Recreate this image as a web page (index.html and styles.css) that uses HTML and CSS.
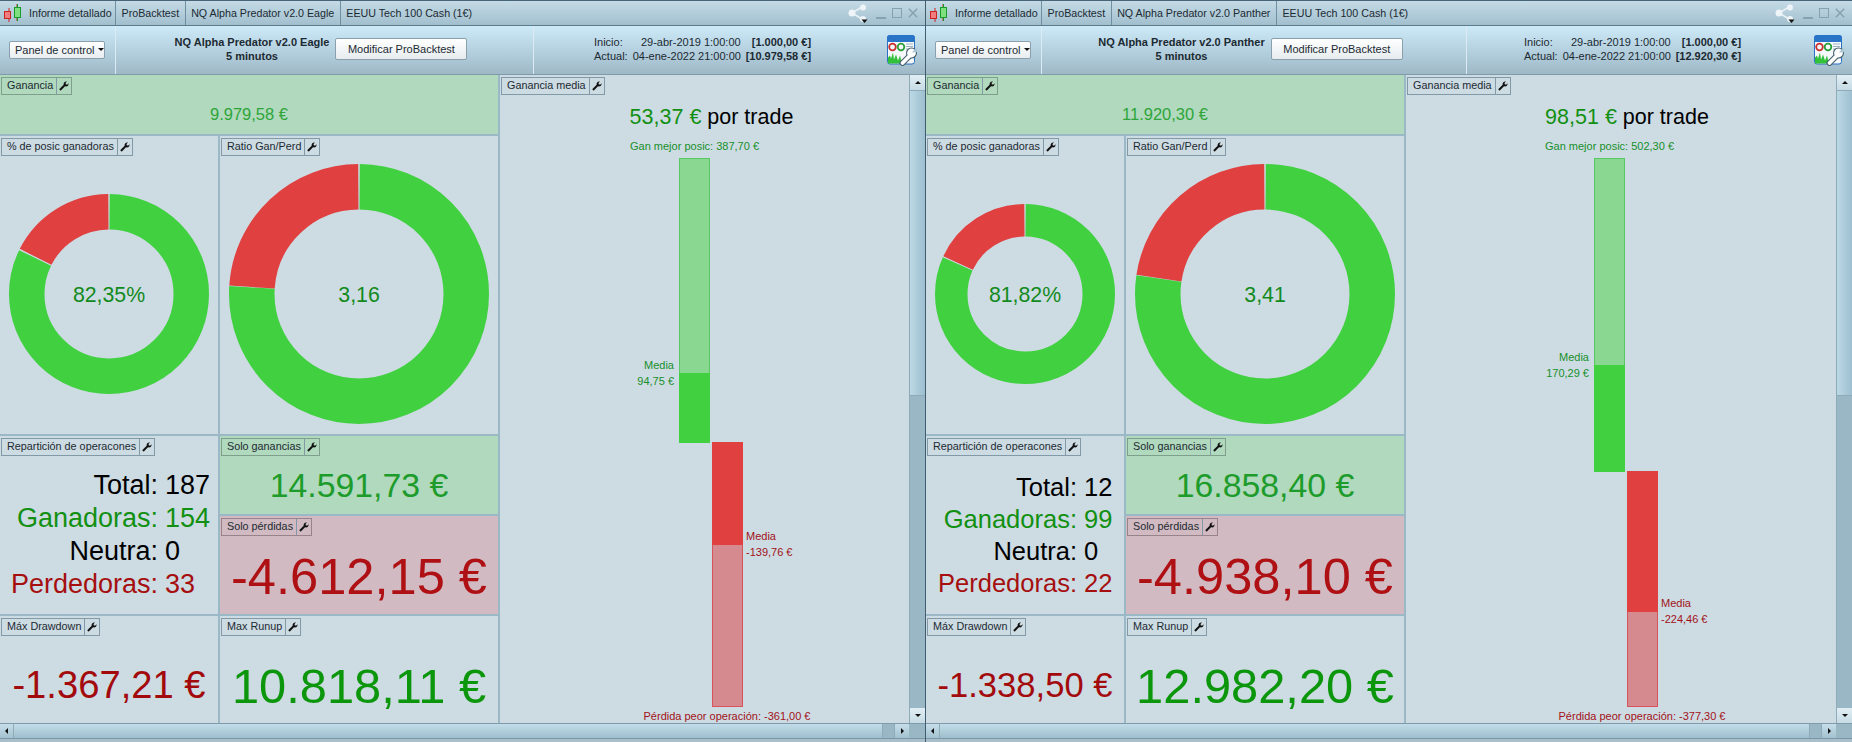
FILE: index.html
```html
<!DOCTYPE html>
<html lang="es">
<head>
<meta charset="utf-8">
<title>Informe detallado</title>
<link rel="stylesheet" href="styles.css">
</head>
<body>
<svg class="defs" width="0" height="0" aria-hidden="true">
  <defs>
    <symbol id="wrench" viewBox="0 0 12 12">
      <path d="M.8 10 5.6 5.2C5 3 6.700 .8 9.600 1.200L7.800 3.100 8.200 4.600 9.700 5 11.500 3.200C11.800 6 9.500 7.800 7.200 7L2.500 11.700C2 12.100 1.400 12 1 11.500L.7 11.200C.4 10.800.4 10.400.8 10Z"/>
    </symbol>
    <symbol id="candles" viewBox="0 0 19 18">
      <path d="M6 4v14M14 0v17" stroke="#c22" stroke-width="1"/>
      <path d="M14.500 0v17" stroke="#1a9a2a" stroke-width="1"/>
      <rect x="1.500" y="7.500" width="6" height="7" fill="#ef7d7d" stroke="#c22"/>
      <rect x="11.500" y="3.500" width="6" height="10" fill="#7fe07f" stroke="#1a9a2a"/>
    </symbol>
    <symbol id="share" viewBox="0 0 20 20">
      <path d="M14 3 4 9l10 6" fill="none" stroke="#e9f1f5" stroke-width="1.600"/>
      <circle cx="15" cy="3.500" r="3" fill="#eef4f7"/>
      <circle cx="4" cy="9" r="3.500" fill="#eef4f7"/>
      <circle cx="15" cy="15" r="3" fill="#eef4f7"/>
      <path d="M13.500 15.500h6l-3 3.500z" fill="#111"/>
    </symbol>
    <symbol id="tool" viewBox="0 0 30 31">
      <rect x=".5" y=".5" width="27" height="28.500" rx="2.500" fill="#f6f9fb" stroke="#2a6fc0"/>
      <path d="M0 3C0 1 1 0 3 0h22c2 0 3 1 3 3v4H0z" fill="#2a74c8"/>
      <circle cx="5.500" cy="12" r="3.300" fill="none" stroke="#c93030" stroke-width="1.800"/>
      <circle cx="14" cy="12" r="3.300" fill="none" stroke="#2aa03a" stroke-width="1.800"/>
      <path d="M19 9h7M19 11.500h7M19 14h7" stroke="#9db3c2"/>
      <path d="M1 28.500v-6l2-2 1 3 2-6 1 7 2-5 2 6 2-5 1 4 2 4z" fill="#33c13a"/>
      <path d="M15.500 28 23.500 20" stroke="#48606e" stroke-width="6" stroke-linecap="round"/>
      <circle cx="24.500" cy="18" r="5.500" fill="#48606e"/>
      <path d="M15.500 28 23.500 20" stroke="#fff" stroke-width="3.800" stroke-linecap="round"/>
      <circle cx="24.500" cy="18" r="4.400" fill="#fff"/>
      <path d="M25 17.500 29 12.500 31 17z" fill="#a9c4d2"/>
    </symbol>
  </defs>
</svg>

<div class="desk">

<section class="win win-a">
  <div class="tabs">
    <div class="tab tab-first"><svg class="candle"><use href="#candles"/></svg><span>Informe detallado</span></div>
    <div class="tab">ProBacktest</div>
    <div class="tab">NQ Alpha Predator v2.0 Eagle</div>
    <div class="tab tab-last">EEUU Tech 100 Cash (1€)</div>
    <div class="winctl">
      <svg class="share"><use href="#share"/></svg>
      <span class="min"></span><span class="max"></span>
      <svg class="close" viewBox="0 0 12 12"><path d="M1 1l10 10M11 1 1 11"/></svg>
    </div>
  </div>
  <div class="toolbar">
    <div class="tb-left"><button class="pick">Panel de control<i class="caret"></i></button></div>
    <div class="tb-mid">
      <div class="tb-title">NQ Alpha Predator v2.0 Eagle<br>5 minutos</div>
      <button class="modify">Modificar ProBacktest</button>
    </div>
    <div class="tb-right">
      <div class="info">
        <span>Inicio:</span><span class="date">29-abr-2019 1:00:00</span><b>[1.000,00 €]</b>
        <span>Actual:</span><span class="date">04-ene-2022 21:00:00</span><b>[10.979,58 €]</b>
      </div>
      <svg class="tool"><use href="#tool"/></svg>
    </div>
  </div>
  <div class="main">
    <div class="dash">
      <div class="panel gain gain-top">
        <div class="tag"><span>Ganancia</span><svg class="wr"><use href="#wrench"/></svg></div>
        <div class="val v16">9.979,58 €</div>
      </div>
      <div class="panel pct">
        <div class="tag"><span>% de posic ganadoras</span><svg class="wr"><use href="#wrench"/></svg></div>
        <div class="donut">
          <svg width="200" height="200" viewBox="-100 -100 200 200">
            <g class="rot" fill="none" stroke-width="35.500">
              <circle r="82.250" pathLength="100" stroke="#40d040" stroke-dasharray="82.120 100" stroke-dashoffset="-.12"/>
              <circle r="82.250" pathLength="100" stroke="#e04040" stroke-dasharray="17.410 100" stroke-dashoffset="-82.470"/>
            </g>
            <text class="dtext" y="8">82,35%</text>
          </svg>
        </div>
      </div>
      <div class="panel ratio">
        <div class="tag"><span>Ratio Gan/Perd</span><svg class="wr"><use href="#wrench"/></svg></div>
        <div class="donut">
          <svg width="260" height="260" viewBox="-130 -130 260 260">
            <g class="rot" fill="none" stroke-width="45.500">
              <circle r="107.250" pathLength="100" stroke="#40d040" stroke-dasharray="75.900 100" stroke-dashoffset="-.1"/>
              <circle r="107.250" pathLength="100" stroke="#e04040" stroke-dasharray="23.840 100" stroke-dashoffset="-76.060"/>
            </g>
            <text class="dtext" y="8">3,16</text>
          </svg>
        </div>
      </div>
      <div class="panel rep">
        <div class="tag"><span>Repartición de operacones</span><svg class="wr"><use href="#wrench"/></svg></div>
        <div class="rep-body">
          <div class="rep-grid">
            <span>Total:</span><span>187</span>
            <span class="g">Ganadoras:</span><span class="g">154</span>
            <span>Neutra:</span><span>0</span>
            <span class="r">Perdedoras:</span><span class="r">33</span>
          </div>
        </div>
      </div>
      <div class="panel gain solo-g">
        <div class="tag"><span>Solo ganancias</span><svg class="wr"><use href="#wrench"/></svg></div>
        <div class="val v33">14.591,73 €</div>
      </div>
      <div class="panel loss solo-p">
        <div class="tag"><span>Solo pérdidas</span><svg class="wr"><use href="#wrench"/></svg></div>
        <div class="val v50">-4.612,15 €</div>
      </div>
      <div class="panel dd">
        <div class="tag"><span>Máx Drawdown</span><svg class="wr"><use href="#wrench"/></svg></div>
        <div class="val v38">-1.367,21 €</div>
      </div>
      <div class="panel ru">
        <div class="tag"><span>Max Runup</span><svg class="wr"><use href="#wrench"/></svg></div>
        <div class="val v48">10.818,11 €</div>
      </div>
      <div class="panel avg">
        <div class="tag"><span>Ganancia media</span><svg class="wr"><use href="#wrench"/></svg></div>
        <div class="avg-title"><span class="avg-num">53,37 €</span> por trade</div>
        <div class="lbl lbl-g lbl-c" style="left:194.5px;top:63px">Gan mejor posic: 387,70 €</div>
        <div class="bar bar-g" style="left:179px;top:83px">
          <div class="b-light" style="height:215px"></div><div class="b-solid" style="height:70px"></div>
        </div>
        <div class="bar bar-r" style="left:212px;top:367px">
          <div class="b-solid" style="height:103px"></div><div class="b-light" style="height:162px"></div>
        </div>
        <div class="lbl lbl-g lbl-l" style="left:174px;top:282px">Media<br>94,75 €</div>
        <div class="lbl lbl-r" style="left:246px;top:453px">Media<br>-139,76 €</div>
        <div class="lbl lbl-r lbl-c" style="left:227px;top:633px">Pérdida peor operación: -361,00 €</div>
      </div>
    </div>
    <div class="vscroll">
      <div class="sb-btn"><i class="ar-up"></i></div>
      <div class="v-thumb"></div>
      <div class="v-track"></div>
      <div class="sb-btn"><i class="ar-down"></i></div>
    </div>
  </div>
  <div class="hscroll">
    <div class="h-btn"><i class="ar-left"></i></div>
    <div class="h-thumb"></div>
    <div class="h-track"></div>
    <div class="h-btn"><i class="ar-right"></i></div>
    <div class="h-corner"></div>
  </div>
  <div class="foot"></div>
</section>

<section class="win win-b">
  <div class="tabs">
    <div class="tab tab-first"><svg class="candle"><use href="#candles"/></svg><span>Informe detallado</span></div>
    <div class="tab">ProBacktest</div>
    <div class="tab">NQ Alpha Predator v2.0 Panther</div>
    <div class="tab tab-last">EEUU Tech 100 Cash (1€)</div>
    <div class="winctl">
      <svg class="share"><use href="#share"/></svg>
      <span class="min"></span><span class="max"></span>
      <svg class="close" viewBox="0 0 12 12"><path d="M1 1l10 10M11 1 1 11"/></svg>
    </div>
  </div>
  <div class="toolbar">
    <div class="tb-left"><button class="pick">Panel de control<i class="caret"></i></button></div>
    <div class="tb-mid">
      <div class="tb-title">NQ Alpha Predator v2.0 Panther<br>5 minutos</div>
      <button class="modify">Modificar ProBacktest</button>
    </div>
    <div class="tb-right">
      <div class="info">
        <span>Inicio:</span><span class="date">29-abr-2019 1:00:00</span><b>[1.000,00 €]</b>
        <span>Actual:</span><span class="date">04-ene-2022 21:00:00</span><b>[12.920,30 €]</b>
      </div>
      <svg class="tool"><use href="#tool"/></svg>
    </div>
  </div>
  <div class="main">
    <div class="dash">
      <div class="panel gain gain-top">
        <div class="tag"><span>Ganancia</span><svg class="wr"><use href="#wrench"/></svg></div>
        <div class="val v16">11.920,30 €</div>
      </div>
      <div class="panel pct">
        <div class="tag"><span>% de posic ganadoras</span><svg class="wr"><use href="#wrench"/></svg></div>
        <div class="donut">
          <svg width="180" height="180" viewBox="-90 -90 180 180">
            <g class="rot" fill="none" stroke-width="32.500">
              <circle r="73.750" pathLength="100" stroke="#40d040" stroke-dasharray="81.550 100" stroke-dashoffset="-.13"/>
              <circle r="73.750" pathLength="100" stroke="#e04040" stroke-dasharray="17.950 100" stroke-dashoffset="-81.920"/>
            </g>
            <text class="dtext" y="8">81,82%</text>
          </svg>
        </div>
      </div>
      <div class="panel ratio">
        <div class="tag"><span>Ratio Gan/Perd</span><svg class="wr"><use href="#wrench"/></svg></div>
        <div class="donut">
          <svg width="260" height="260" viewBox="-130 -130 260 260">
            <g class="rot" fill="none" stroke-width="45.500">
              <circle r="107.250" pathLength="100" stroke="#40d040" stroke-dasharray="77.220 100" stroke-dashoffset="-.1"/>
              <circle r="107.250" pathLength="100" stroke="#e04040" stroke-dasharray="22.520 100" stroke-dashoffset="-77.380"/>
            </g>
            <text class="dtext" y="8">3,41</text>
          </svg>
        </div>
      </div>
      <div class="panel rep">
        <div class="tag"><span>Repartición de operacones</span><svg class="wr"><use href="#wrench"/></svg></div>
        <div class="rep-body">
          <div class="rep-grid">
            <span>Total:</span><span>12</span>
            <span class="g">Ganadoras:</span><span class="g">99</span>
            <span>Neutra:</span><span>0</span>
            <span class="r">Perdedoras:</span><span class="r">22</span>
          </div>
        </div>
      </div>
      <div class="panel gain solo-g">
        <div class="tag"><span>Solo ganancias</span><svg class="wr"><use href="#wrench"/></svg></div>
        <div class="val v33">16.858,40 €</div>
      </div>
      <div class="panel loss solo-p">
        <div class="tag"><span>Solo pérdidas</span><svg class="wr"><use href="#wrench"/></svg></div>
        <div class="val v50">-4.938,10 €</div>
      </div>
      <div class="panel dd">
        <div class="tag"><span>Máx Drawdown</span><svg class="wr"><use href="#wrench"/></svg></div>
        <div class="val v34">-1.338,50 €</div>
      </div>
      <div class="panel ru">
        <div class="tag"><span>Max Runup</span><svg class="wr"><use href="#wrench"/></svg></div>
        <div class="val v48">12.982,20 €</div>
      </div>
      <div class="panel avg">
        <div class="tag"><span>Ganancia media</span><svg class="wr"><use href="#wrench"/></svg></div>
        <div class="avg-title"><span class="avg-num">98,51 €</span> por trade</div>
        <div class="lbl lbl-g lbl-c" style="left:203.5px;top:63px">Gan mejor posic: 502,30 €</div>
        <div class="bar bar-g" style="left:188px;top:83px">
          <div class="b-light" style="height:207px"></div><div class="b-solid" style="height:107px"></div>
        </div>
        <div class="bar bar-r" style="left:221px;top:396px">
          <div class="b-solid" style="height:141px"></div><div class="b-light" style="height:95px"></div>
        </div>
        <div class="lbl lbl-g lbl-l" style="left:183px;top:274px">Media<br>170,29 €</div>
        <div class="lbl lbl-r" style="left:255px;top:520px">Media<br>-224,46 €</div>
        <div class="lbl lbl-r lbl-c" style="left:236px;top:633px">Pérdida peor operación: -377,30 €</div>
      </div>
    </div>
    <div class="vscroll">
      <div class="sb-btn"><i class="ar-up"></i></div>
      <div class="v-thumb"></div>
      <div class="v-track"></div>
      <div class="sb-btn"><i class="ar-down"></i></div>
    </div>
  </div>
  <div class="hscroll">
    <div class="h-btn"><i class="ar-left"></i></div>
    <div class="h-thumb"></div>
    <div class="h-track"></div>
    <div class="h-btn"><i class="ar-right"></i></div>
    <div class="h-corner"></div>
  </div>
  <div class="foot"></div>
</section>

</div>
</body>
</html>
```
FILE: styles.css
```css
* { box-sizing: border-box; }
html, body { margin: 0; padding: 0; height: 100%; overflow: hidden; }
body { font-family: "Liberation Sans", Arial, sans-serif; font-size: 11px; color: #1c2a32; background: #9ab8c6; }
.defs { position: absolute; }
.desk { display: flex; width: 1852px; height: 742px; }

.win { display: flex; flex-direction: column; height: 742px; }
.win-a { width: 926px; border-right: 1px solid #3f5d6f; --c1: 218px; --c3: 409px; --lab: 158px; --rep-lh: 33px; --rep-fs: 27px; --mid: 418px; --info-pad: 60px; }
.win-b { width: 926px; --c1: 198px; --c3: 430px; --lab: 151px; --rep-lh: 32px; --rep-fs: 25.500px; --mid: 425px; --info-pad: 57px; }

/* title bar with tabs */
.tabs { display: flex; align-items: stretch; height: 26px; flex: none; border-top: 1px solid #476577; border-bottom: 1px solid #5c7a8c; background: linear-gradient(#c4dbe6, #a2bfce); }
.tab { display: flex; align-items: center; padding: 0 5.500px; border-right: 1px solid #6f8ea0; font-size: 10.700px; white-space: nowrap; }
.tab-first { width: 116px; padding: 0 0 0 3px; gap: 7px; }
.tab-last { border-right: 0; }
.candle { width: 19px; height: 18px; flex: none; }
.winctl { margin-left: auto; display: flex; align-items: center; padding-right: 7px; }
.share { width: 20px; height: 20px; margin-right: 8px; margin-top: 1px; }
.min { width: 10px; height: 2px; background: #86a1b0; margin: 9px 6px 0 0; }
.max { width: 10px; height: 10px; border: 1px solid #86a1b0; margin-right: 6px; }
.close { width: 10px; height: 10px; fill: none; stroke: #86a1b0; stroke-width: 1.800; }

/* toolbar */
.toolbar { display: flex; height: 49px; flex: none; border-bottom: 1px solid #7f9bab; background: linear-gradient(#cdeaf9, #9eb8c6); }
.tb-left { width: 116px; flex: none; display: flex; align-items: center; padding-left: 9px; padding-bottom: 1px; border-right: 1px solid #dcebf3; }
.pick { display: flex; align-items: center; width: 96px; height: 18px; padding: 0 0 0 5px; font: 11px "Liberation Sans", Arial, sans-serif; white-space: nowrap; color: #1c2a32; background: linear-gradient(#fff, #e8edf0); border: 1px solid #8aa0ad; border-radius: 2px; }
.caret { width: 0; height: 0; margin-left: 3px; border-left: 3px solid transparent; border-right: 3px solid transparent; border-top: 3px solid #111; }
.tb-mid { width: var(--mid); flex: none; display: flex; align-items: center; justify-content: center; gap: 6px; padding-right: 7px; padding-bottom: 2px; border-right: 1px solid #dcebf3; }
.tb-title { font-weight: 700; text-align: center; line-height: 14px; white-space: nowrap; }
.modify { width: 132px; height: 22px; padding: 0; font: 11px "Liberation Sans", Arial, sans-serif; color: #1c2a32; background: linear-gradient(#fff, #e6ecef); border: 1px solid #8aa0ad; border-radius: 2px; }
.tb-right { flex: 1; display: flex; align-items: center; padding-left: var(--info-pad); padding-right: 8px; }
.info { display: grid; grid-template-columns: auto 108px auto; column-gap: 5px; line-height: 14px; margin-bottom: 2px; white-space: nowrap; }
.info .date { text-align: right; }
.info b { text-align: right; }
.tool { width: 30px; height: 31px; margin-left: auto; margin-top: 1px; flex: none; }

/* main */
.main { display: flex; height: 648px; flex: none; }
.dash { flex: 1; display: grid; gap: 2px; background: #9ab8c6; grid-template-columns: var(--c1) 278px var(--c3); grid-template-rows: 59px 298px 78px 98px 107px; }
.panel { background: #cddbe3; display: flex; flex-direction: column; min-width: 0; overflow: hidden; }
.gain { background: #b0d9bd; }
.loss { background: #d1bac1; }
.gain-top { grid-column: 1 / 3; grid-row: 1; }
.pct { grid-column: 1; grid-row: 2; }
.ratio { grid-column: 2; grid-row: 2; }
.rep { grid-column: 1; grid-row: 3 / 5; }
.solo-g { grid-column: 2; grid-row: 3; }
.solo-p { grid-column: 2; grid-row: 4; }
.dd { grid-column: 1; grid-row: 5; }
.ru { grid-column: 2; grid-row: 5; }
.avg { grid-column: 3; grid-row: 1 / 6; position: relative; }

/* panel caption */
.tag { display: inline-flex; align-self: flex-start; align-items: stretch; height: 18px; margin: 2px 0 0 1px; flex: none; border: 1px solid #8299a8; color: #1c2a32; font-size: 10.800px; }
.gain .tag { border-color: #7d9f8c; }
.loss .tag { border-color: #99838b; }
.tag span { padding: 0 3px 0 5px; line-height: 15px; white-space: nowrap; }
.wr { width: 15px; height: 16px; padding: 2px 2px 3px 2px; border-left: 1px solid #8299a8; fill: #111; flex: none; }

/* values */
.val { flex: 1; display: flex; align-items: center; justify-content: center; white-space: nowrap; }
.v16 { font-size: 16.500px; color: #2ea53a; }
.v33 { font-size: 33.800px; color: #1d9c2b; }
.v50 { font-size: 50.600px; color: #ae1014; padding-top: 2px; }
.v38 { font-size: 38.200px; color: #a30a0c; padding-top: 10px; }
.v34 { font-size: 34.600px; color: #a30a0c; padding-top: 12px; }
.v48 { font-size: 48.800px; color: #0b960b; padding-top: 12px; }

/* donuts */
.donut { flex: 1; display: flex; align-items: center; justify-content: center; padding-bottom: 2px; }
.rot circle { transform: rotate(-90deg); }
.dtext { font-size: 21.300px; fill: #128a1c; text-anchor: middle; }

/* trade split */
.rep-body { flex: 1; display: flex; align-items: center; }
.win-b .rep-body { padding-bottom: 1px; }
.rep-grid { display: grid; grid-template-columns: var(--lab) auto; column-gap: 7px; font-size: var(--rep-fs); line-height: var(--rep-lh); color: #000; }
.rep-grid span:nth-child(odd) { text-align: right; white-space: nowrap; }
.rep-grid .g { color: #129012; }
.rep-grid .r { color: #a50f0f; }

/* average trade chart */
.avg-title { font-size: 21.500px; line-height: 30px; color: #000; text-align: center; padding-top: 7px; }
.win-a .avg-title { padding-left: 14px; }
.win-b .avg-title { padding-left: 12px; }
.avg-num { color: #129012; }
.bar { position: absolute; width: 31px; display: flex; flex-direction: column; }
.bar-g .b-light { background: #8ad792; border: 1px solid #58c962; border-bottom: 0; }
.bar-g .b-solid { background: #40d040; }
.bar-r .b-light { background: #d58a90; border: 1px solid #d8545c; border-top: 0; }
.bar-r .b-solid { background: #e04040; }
.lbl { position: absolute; line-height: 16px; white-space: nowrap; }
.lbl-g { color: #17902a; }
.lbl-r { color: #a11218; }
.lbl-c { transform: translateX(-50%); }
.lbl-l { transform: translateX(-100%); text-align: right; }

/* scrollbars */
.vscroll { width: 16px; flex: none; display: flex; flex-direction: column; background: #9ab7c5; border-left: 1px solid #8fabb9; }
.sb-btn { height: 15px; flex: none; display: flex; align-items: center; justify-content: center; background: linear-gradient(#e1eef4, #c6dbe5); }
.v-thumb { height: 306px; flex: none; background: linear-gradient(90deg, #bcd8e5, #9dbfcf); border-top: 1px solid #8fabb9; border-bottom: 1px solid #8fabb9; }
.v-track { flex: 1; }
.ar-up, .ar-down, .ar-left, .ar-right { width: 0; height: 0; display: block; border-style: solid; border-color: transparent; }
.ar-up { border-width: 0 3.500px 3.500px; border-bottom-color: #111; }
.ar-down { border-width: 3.500px 3.500px 0; border-top-color: #111; }
.ar-left { border-width: 3.500px 3.500px 3.500px 0; border-right-color: #111; }
.ar-right { border-width: 3.500px 0 3.500px 3.500px; border-left-color: #111; }
.hscroll { display: flex; height: 15px; flex: none; border-top: 1px solid #7f9bab; background: #9ab7c5; }
.h-btn { width: 14px; flex: none; display: flex; align-items: center; justify-content: center; background: linear-gradient(#c6deea, #a3c1cf); border-right: 1px solid #8fabb9; }
.h-thumb { flex: 1; background: linear-gradient(#c2dde9, #9fbecd); }
.h-track { width: 12px; flex: none; border-left: 1px solid #8fabb9; }
.h-corner { width: 16px; flex: none; }
.hscroll .h-btn:nth-last-child(2) { width: 15px; border-right: 0; border-left: 1px solid #8fabb9; }
.foot { flex: 1; border-top: 1px solid #7b96a5; background: #a9bfca; }
```
